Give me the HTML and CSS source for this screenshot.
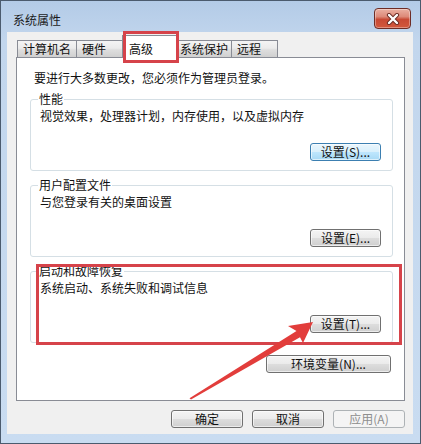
FILE: index.html
```html
<!DOCTYPE html>
<html lang="zh-CN">
<head>
<meta charset="utf-8">
<title>系统属性</title>
<link rel="stylesheet" href="styles.css">
</head>
<body>
<div class="window">
  <div class="titlebar">
    <span class="title">系统属性</span>
    <div class="close">
      <svg width="14" height="12" viewBox="0 0 14 12">
        <path d="M3 2 L11 10 M11 2 L3 10" stroke="#6a2a22" stroke-width="4.2" stroke-linecap="round"/>
        <path d="M3 2 L11 10 M11 2 L3 10" stroke="#ffffff" stroke-width="2.4" stroke-linecap="round"/>
      </svg>
    </div>
  </div>
  <div class="client">
    <div class="tabs">
      <div class="tab">计算机名</div>
      <div class="tab">硬件</div>
      <div class="tab tab-active">高级</div>
      <div class="tab tab-compact">系统保护</div>
      <div class="tab">远程</div>
    </div>
    <div class="panel">
      <p class="note">要进行大多数更改，您必须作为管理员登录。</p>
      <fieldset class="group">
        <legend>性能</legend>
        <p class="desc">视觉效果，处理器计划，内存使用，以及虚拟内存</p>
        <div class="row"><button class="btn btn-default">设置(S)...</button></div>
      </fieldset>
      <fieldset class="group">
        <legend>用户配置文件</legend>
        <p class="desc">与您登录有关的桌面设置</p>
        <div class="row"><button class="btn">设置(E)...</button></div>
      </fieldset>
      <fieldset class="group">
        <legend>启动和故障恢复</legend>
        <p class="desc">系统启动、系统失败和调试信息</p>
        <div class="row"><button class="btn">设置(T)...</button></div>
      </fieldset>
      <div class="row env-row"><button class="btn btn-wide">环境变量(N)...</button></div>
    </div>
    <div class="footer">
      <button class="btn btn-footer">确定</button>
      <button class="btn btn-footer">取消</button>
      <button class="btn btn-footer btn-disabled">应用(A)</button>
    </div>
  </div>
  <div class="mark mark-tab"></div>
  <div class="mark mark-group"></div>
  <svg class="arrow" width="421" height="444" viewBox="0 0 421 444">
    <polygon points="313,322 288,326 296.5,331 189.5,398.2 191,399.6 300,337.2 303,343" fill="#e23d3b"/>
  </svg>
</div>
</body>
</html>
```
FILE: styles.css
```css
html, body {
  margin: 0;
  padding: 0;
  background: #ffffff;
}

body {
  font-family: "Noto Sans CJK SC", "Noto Sans", sans-serif;
  font-size: 12px;
  color: #111111;
}

.window {
  position: relative;
  box-sizing: border-box;
  width: 421px;
  height: 444px;
  border: 1px solid #4b5b6e;
  background: linear-gradient(180deg, #b3cbe7 0px, #c2d6ed 40px, #c9dcf1 100%);
  display: flex;
  flex-direction: column;
  overflow: hidden;
}

.titlebar {
  height: 31px;
  flex: none;
  display: flex;
  align-items: flex-start;
}

.title {
  margin-left: 12px;
  margin-top: 11px;
  line-height: 16px;
  color: #1b1b1b;
}

.close {
  margin-left: auto;
  margin-right: 9px;
  margin-top: 7px;
  box-sizing: border-box;
  width: 37px;
  height: 21px;
  border: 1px solid #6e2d26;
  border-radius: 4px;
  background: linear-gradient(180deg, #eab0a2 0%, #dd8a79 40%, #c84a35 55%, #d2583d 100%);
  display: flex;
  align-items: center;
  justify-content: center;
  box-shadow: inset 0 0 0 1px rgba(255, 255, 255, 0.35);
}

.client {
  flex: 1;
  margin: 0 7px 9px 6px;
  background: #f0f0f0;
  padding: 4px 8px 6px 9px;
  display: flex;
  flex-direction: column;
}

.tabs {
  display: flex;
  align-items: flex-end;
  padding-left: 1px;
  height: 21px;
  position: relative;
  z-index: 1;
}

.tab {
  box-sizing: border-box;
  min-width: 47px;
  padding: 0 5px;
  line-height: 16px;
  border: 1px solid #898c95;
  border-bottom: none;
  margin-right: -1px;
  background: linear-gradient(180deg, #f4f4f4 0%, #ebebeb 45%, #dedede 55%, #d0d0d0 100%);
  white-space: nowrap;
}

.tab-compact {
  padding: 0 3px;
}

.tab-active {
  background: #ffffff;
  width: 55px;
  padding: 5px 6px 0 6px;
  margin-bottom: -1px;
  height: 23px;
}

.panel {
  box-sizing: border-box;
  height: 344px;
  background: #ffffff;
  border: 1px solid #898c95;
  padding: 12px 11px 0 13px;
  display: flex;
  flex-direction: column;
}

.note {
  margin: 0;
  padding-left: 4px;
  line-height: 16px;
}

.group {
  margin: 6px 0 0 0;
  padding: 0 11px 9px 9px;
  border: 1px solid #d5dfe5;
  border-radius: 3px;
}

.group:first-of-type {
  margin-top: 5px;
}

.group legend {
  padding: 0 1px;
  margin-left: -2px;
  line-height: 16px;
}

.desc {
  margin: 1px 0 0 0;
  line-height: 16px;
}

.row {
  display: flex;
  justify-content: flex-end;
  margin-top: 19px;
}

.env-row {
  margin-top: 12px;
  margin-right: 2px;
}

.btn {
  box-sizing: border-box;
  font: inherit;
  color: #111111;
  height: 18px;
  width: 71px;
  padding: 0;
  line-height: 16px;
  border: 1px solid #707070;
  border-radius: 3px;
  background: linear-gradient(180deg, #f4f4f4 0%, #ebebeb 48%, #dddddd 52%, #cfcfcf 100%);
  box-shadow: inset 0 0 0 1px rgba(255, 255, 255, 0.6);
  white-space: nowrap;
}

.btn-default {
  border-color: #3c7fb1;
  background: linear-gradient(180deg, #eaf6fd 0%, #d9f0fc 48%, #bee6fd 52%, #a7d9f5 100%);
}

.btn-wide {
  width: 125px;
}

.footer {
  display: flex;
  justify-content: flex-end;
  gap: 9px;
  margin-top: 9px;
}

.btn-footer {
  width: 72px;
}

.btn-disabled {
  color: #8e8e8e;
  border-color: #adb2b5;
  background: #f4f4f4;
  box-shadow: none;
}

.mark {
  position: absolute;
  box-sizing: border-box;
  border: 3px solid #d6434a;
  z-index: 2;
  pointer-events: none;
}

.mark-tab {
  left: 122px;
  top: 30px;
  width: 56px;
  height: 32px;
}

.mark-group {
  left: 35px;
  top: 263px;
  width: 366px;
  height: 81px;
}

.arrow {
  position: absolute;
  left: -1px;
  top: -1px;
  z-index: 3;
  pointer-events: none;
}
```
